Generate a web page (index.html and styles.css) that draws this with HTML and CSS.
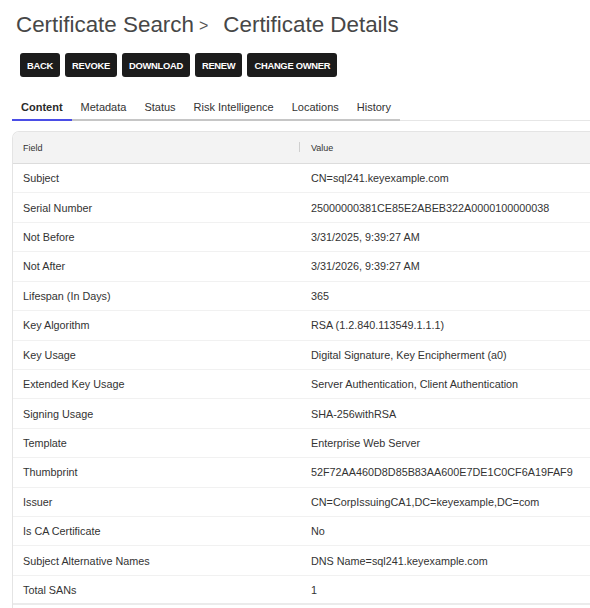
FILE: index.html
```html
<!DOCTYPE html>
<html lang="en">
<head>
<meta charset="utf-8">
<title>Certificate Details</title>
<link rel="stylesheet" href="styles.css">
</head>
<body>
<div class="page">
  <h1 class="title">Certificate Search<span class="sep">&gt;</span>Certificate Details</h1>
  <div class="actions">
    <button class="btn">BACK</button>
    <button class="btn">REVOKE</button>
    <button class="btn">DOWNLOAD</button>
    <button class="btn">RENEW</button>
    <button class="btn">CHANGE OWNER</button>
  </div>
  <div class="tabs">
    <div class="tab active">Content</div>
    <div class="tab">Metadata</div>
    <div class="tab">Status</div>
    <div class="tab">Risk Intelligence</div>
    <div class="tab">Locations</div>
    <div class="tab">History</div>
  </div>
  <div class="grid">
    <div class="row head">
      <div class="cell field">Field</div>
      <div class="cell value">Value</div>
    </div>
    <div class="row"><div class="cell field">Subject</div><div class="cell value">CN=sql241.keyexample.com</div></div>
    <div class="row"><div class="cell field">Serial Number</div><div class="cell value">25000000381CE85E2ABEB322A0000100000038</div></div>
    <div class="row"><div class="cell field">Not Before</div><div class="cell value">3/31/2025, 9:39:27 AM</div></div>
    <div class="row"><div class="cell field">Not After</div><div class="cell value">3/31/2026, 9:39:27 AM</div></div>
    <div class="row"><div class="cell field">Lifespan (In Days)</div><div class="cell value">365</div></div>
    <div class="row"><div class="cell field">Key Algorithm</div><div class="cell value">RSA (1.2.840.113549.1.1.1)</div></div>
    <div class="row"><div class="cell field">Key Usage</div><div class="cell value">Digital Signature, Key Encipherment (a0)</div></div>
    <div class="row"><div class="cell field">Extended Key Usage</div><div class="cell value">Server Authentication, Client Authentication</div></div>
    <div class="row"><div class="cell field">Signing Usage</div><div class="cell value">SHA-256withRSA</div></div>
    <div class="row"><div class="cell field">Template</div><div class="cell value">Enterprise Web Server</div></div>
    <div class="row"><div class="cell field">Thumbprint</div><div class="cell value">52F72AA460D8D85B83AA600E7DE1C0CF6A19FAF9</div></div>
    <div class="row"><div class="cell field">Issuer</div><div class="cell value">CN=CorpIssuingCA1,DC=keyexample,DC=com</div></div>
    <div class="row"><div class="cell field">Is CA Certificate</div><div class="cell value">No</div></div>
    <div class="row"><div class="cell field">Subject Alternative Names</div><div class="cell value">DNS Name=sql241.keyexample.com</div></div>
    <div class="row last"><div class="cell field">Total SANs</div><div class="cell value">1</div></div>
    <div class="row"><div class="cell field">&nbsp;</div><div class="cell value">&nbsp;</div></div>
  </div>
</div>
</body>
</html>
```

FILE: styles.css
```css
html, body {
  margin: 0;
  padding: 0;
  overflow: hidden;
  background: #ffffff;
}

body {
  font-family: "Liberation Sans", Arial, sans-serif;
  color: #333333;
}

.page {
  padding: 12px 0 0 12px;
}

.title {
  margin: 0 0 0 4px;
  height: 26px;
  font-size: 22.4px;
  line-height: 26px;
  font-weight: 400;
  color: #474747;
  white-space: nowrap;
}

.sep {
  display: inline-block;
  font-size: 16px;
  line-height: 16px;
  margin: 0 15px 0 5px;
  color: #555555;
  vertical-align: 1px;
}

.actions {
  display: flex;
  gap: 5px;
  margin: 15px 0 0 8px;
}

.btn {
  height: 24px;
  padding: 0 7px;
  border: none;
  border-radius: 3px;
  background: #1c1c1c;
  color: #ffffff;
  font-family: "Liberation Sans", Arial, sans-serif;
  font-size: 9.4px;
  font-weight: 700;
  letter-spacing: -0.28px;
}

.tabs {
  display: flex;
  margin-top: 18px;
  border-bottom: 1px solid #e6e6e6;
}

.tab {
  padding: 5px 9px 5px 9px;
  line-height: 14px;
  font-size: 11px;
  color: #333333;
  border-bottom: 2px solid #c6c6c6;
  margin-bottom: -1px;
  white-space: nowrap;
}

.tab.active {
  font-weight: 700;
  color: #2a2a2a;
  border-bottom-color: #4a4de6;
}

.grid {
  margin-top: 10px;
  border: 1px solid #e4e4e4;
  border-right: none;
  border-bottom: none;
  border-radius: 7px 0 0 0;
  overflow: hidden;
}

.row {
  display: flex;
  height: 29.43px;
  align-items: center;
  border-bottom: 1px solid #f1f1f1;
  box-sizing: border-box;
  font-size: 10.8px;
  white-space: nowrap;
}

.row.head {
  height: 32px;
  background: #f3f3f3;
  border-bottom: 1px solid #dcdcdc;
  font-size: 9px;
  color: #333333;
}

.row.last {
  border-bottom: 2px solid #ebebeb;
}

.cell {
  box-sizing: border-box;
}

.field {
  flex: 0 0 286px;
  padding-left: 10px;
}

.value {
  position: relative;
  padding-left: 12px;
}

.head .value::before {
  content: "";
  position: absolute;
  left: 0;
  top: -1px;
  width: 1px;
  height: 10px;
  background: #cfcfcf;
}
```
